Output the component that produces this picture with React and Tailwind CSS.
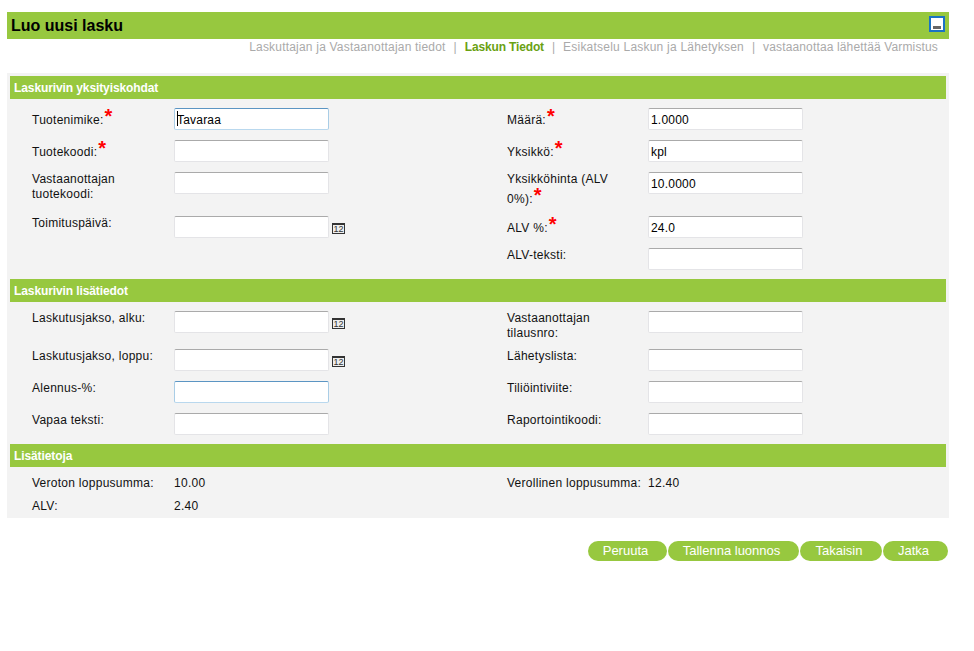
const font = "[font-family:'Liberation_Sans',Arial,sans-serif]";

function Star() {
  return <span className="text-[20px] leading-[16px] text-[#ff0000] font-bold ml-[1px] align-[1px]">*</span>;
}

function CalendarIcon() {
  return (
    <div className="ml-[3px] mt-[7px] w-[13px] h-[11px] shrink-0 bg-[#eeeeee] border border-[#333333] border-t-2 text-[9px] leading-[9px] text-center text-[#333333] overflow-hidden">
      12
    </div>
  );
}

function Input({ value = "", focus = false, caret = false }) {
  return (
    <div
      className={`relative w-[155px] h-[22px] bg-white rounded-[2px] border shrink-0 pl-[2px] text-[12px] tracking-[0.2px] leading-[22px] text-black ${
        focus
          ? "border-t-[#5b95c3] border-x-[#a9cde6] border-b-[#b9d8ee]"
          : "border-[#e4e4e7] border-t-[#aaaaaa]"
      }`}
    >
      {caret && <span className="absolute left-[2px] top-[2px] w-px h-[15px] bg-black" />}
      {value}
    </div>
  );
}

function Field({ label, required, value, focus, caret, cal, width, height, labelClass = "" }) {
  return (
    <div className="flex items-start" style={{ height }}>
      <div className={`shrink-0 text-[12px] tracking-[0.27px] leading-[15px] text-[#111111] ${width} ${labelClass}`}>
        {label}
        {required && <Star />}
      </div>
      <Input value={value} focus={focus} caret={caret} />
      {cal && <CalendarIcon />}
    </div>
  );
}

function Row({ left, right, height }) {
  return (
    <div className="flex" style={{ height }}>
      <div className="w-[497px] pl-[22px] shrink-0">
        {left && <Field {...left} width="w-[142px]" height={height} />}
      </div>
      <div className="flex-1">
        {right && <Field {...right} width="w-[141px]" height={height} />}
      </div>
    </div>
  );
}

function SectionHead({ children }) {
  return (
    <div className="h-[23px] bg-[#97c83f] pl-[4px] pt-[1px] text-[12px] leading-[23px] font-bold text-white tracking-[-0.1px]">
      {children}
    </div>
  );
}

function Btn({ children, w }) {
  return (
    <div className={`h-[20px] rounded-full bg-[#97c83f] text-white text-[13px] leading-[20px] text-center pr-[4px] ${w}`}>
      {children}
    </div>
  );
}

export default function App() {
  return (
    <div className={`w-[974px] h-[651px] bg-white overflow-hidden pl-[7px] pr-[25px] pt-[12px] ${font}`}>
      <div className="h-[27px] bg-[#97c83f] flex items-start justify-between pl-[4px] pr-[4px]">
        <div className="text-[16px] font-bold text-black leading-[27px]">Luo uusi lasku</div>
        <div className="mt-[4px] w-[16px] h-[16px] bg-white border-2 border-[#1a73c4] flex items-end justify-center pb-[1px]">
          <div className="w-[8px] h-[3px] bg-[#666666]" />
        </div>
      </div>

      <div className="flex justify-end pr-[11px] h-[34px] text-[12px] leading-[16px] text-[#aaaaaa]">
        <span className="tracking-[0.2px]">Laskuttajan ja Vastaanottajan tiedot</span>
        <span className="mx-[8px]">|</span>
        <span className="font-bold text-[#6aa112] tracking-[-0.15px]">Laskun Tiedot</span>
        <span className="mx-[8px]">|</span>
        <span className="tracking-[0.22px]">Esikatselu Laskun ja Lähetyksen</span>
        <span className="mx-[8px]">|</span>
        <span className="tracking-[0.14px]">vastaanottaa lähettää Varmistus</span>
      </div>

      <div className="bg-[#f3f3f3] px-[3px] pt-[3px] h-[445px]">
        <SectionHead>Laskurivin yksityiskohdat</SectionHead>
        <div className="pt-[9px] h-[180px]">
          <Row height={32} left={{ label: "Tuotenimike:", required: true, value: "Tavaraa", focus: true, caret: true }} right={{ label: "Määrä:", required: true, value: "1.0000" }} />
          <Row height={32} left={{ label: "Tuotekoodi:", required: true }} right={{ label: "Yksikkö:", required: true, value: "kpl" }} />
          <Row height={44} left={{ label: "Vastaanottajan tuotekoodi:", labelClass: "pr-[30px]" }} right={{ label: "Yksikköhinta (ALV 0%):", required: true, value: "10.0000", labelClass: "pr-[20px]" }} />
          <Row height={32} left={{ label: "Toimituspäivä:", cal: true }} right={{ label: "ALV %:", required: true, value: "24.0" }} />
          <Row height={31} right={{ label: "ALV-teksti:" }} />
        </div>

        <SectionHead>Laskurivin lisätiedot</SectionHead>
        <div className="pt-[9px] h-[142px]">
          <Row height={38} left={{ label: "Laskutusjakso, alku:", cal: true }} right={{ label: "Vastaanottajan tilausnro:", labelClass: "pr-[30px]" }} />
          <Row height={32} left={{ label: "Laskutusjakso, loppu:", cal: true }} right={{ label: "Lähetyslista:" }} />
          <Row height={32} left={{ label: "Alennus-%:", focus: true }} right={{ label: "Tiliöintiviite:" }} />
          <Row height={31} left={{ label: "Vapaa teksti:" }} right={{ label: "Raportointikoodi:" }} />
        </div>

        <SectionHead>Lisätietoja</SectionHead>
        <div className="pt-[9px] text-[12px] leading-[15px] text-[#111111] tracking-[0.27px]">
          <div className="flex h-[23px]">
            <div className="w-[497px] pl-[22px] flex shrink-0">
              <div className="w-[142px] shrink-0">Veroton loppusumma:</div>
              <div>10.00</div>
            </div>
            <div className="flex">
              <div className="w-[141px] shrink-0">Verollinen loppusumma:</div>
              <div>12.40</div>
            </div>
          </div>
          <div className="flex h-[20px]">
            <div className="w-[497px] pl-[22px] flex shrink-0">
              <div className="w-[142px] shrink-0">ALV:</div>
              <div>2.40</div>
            </div>
          </div>
        </div>
      </div>

      <div className="flex justify-end gap-[1px] pt-[23px] pr-[1px]">
        <Btn w="w-[79px]">Peruuta</Btn>
        <Btn w="w-[131px]">Tallenna luonnos</Btn>
        <Btn w="w-[82px]">Takaisin</Btn>
        <Btn w="w-[65px]">Jatka</Btn>
      </div>
    </div>
  );
}
